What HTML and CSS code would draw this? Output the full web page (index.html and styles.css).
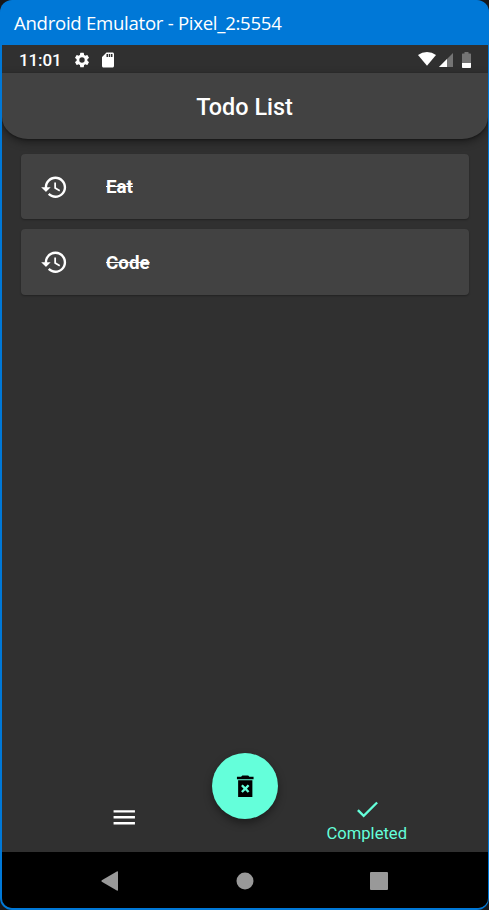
FILE: index.html
```html
<!DOCTYPE html>
<html lang="en">
<head>
<meta charset="utf-8">
<title>Todo List</title>
<link rel="stylesheet" href="styles.css">
</head>
<body>
<div class="window">
  <div class="titlebar"><span class="window-title">Android Emulator - Pixel_2:5554</span></div>
  <div class="screen">
    <div class="status">
      <span class="clock">11:01</span>
      <svg class="gear" viewBox="0 0 24 24"><path d="M19.14 12.94c.04-.3.06-.61.06-.94 0-.32-.02-.64-.07-.94l2.03-1.58a.49.49 0 0 0 .12-.61l-1.92-3.32a.49.49 0 0 0-.59-.22l-2.39.96c-.5-.38-1.03-.7-1.62-.94l-.36-2.54a.48.48 0 0 0-.48-.41h-3.84a.47.47 0 0 0-.47.41l-.36 2.54c-.59.24-1.13.57-1.62.94l-2.39-.96a.48.48 0 0 0-.59.22L2.74 8.87a.48.48 0 0 0 .12.61l2.03 1.58c-.05.3-.09.63-.09.94s.02.64.07.94l-2.03 1.58a.49.49 0 0 0-.12.61l1.92 3.32c.12.22.37.29.59.22l2.39-.96c.5.38 1.03.7 1.62.94l.36 2.54c.05.24.24.41.48.41h3.84c.24 0 .44-.17.47-.41l.36-2.54c.59-.24 1.13-.56 1.62-.94l2.39.96c.22.08.47 0 .59-.22l1.92-3.32a.47.47 0 0 0-.12-.61l-2.01-1.58zM12 15.6A3.6 3.6 0 1 1 12 8.4a3.6 3.6 0 0 1 0 7.2z"/></svg>
      <svg class="sd" viewBox="0 0 24 24"><path d="M18 2h-8L4.02 8 4 20c0 1.1.9 2 2 2h12c1.1 0 2-.9 2-2V4c0-1.1-.9-2-2-2zm-6 6h-2V4h2v4zm3 0h-2V4h2v4zm3 0h-2V4h2v4z"/></svg>
      <span class="spacer"></span>
      <svg class="wifi" viewBox="0 0 18 14"><path d="M9 13.8 0 2.9Q4 0 9 0t9 2.9z"/></svg>
      <svg class="signal" viewBox="0 0 14 14"><path class="dim" d="M14 0v14H0z"/><path d="M8 6v8H0z"/></svg>
      <svg class="battery" viewBox="0 0 9 16"><path class="dim" d="M2.5 0h4v1.5H8.3a.7.7 0 0 1 .7.7V11H0V2.2a.7.7 0 0 1 .7-.7h1.8z"/><path d="M0 11h9v4.3a.7.7 0 0 1-.7.7H.7a.7.7 0 0 1-.7-.7z"/></svg>
    </div>
    <header class="appbar"><h1>Todo List</h1></header>
    <main class="list">
      <div class="card">
        <svg class="icon" viewBox="0 0 24 24"><path d="M13 3c-4.97 0-9 4.03-9 9H1l3.89 3.89.07.14L9 12H6c0-3.87 3.13-7 7-7s7 3.13 7 7-3.13 7-7 7c-1.93 0-3.68-.79-4.94-2.06l-1.42 1.42C8.27 19.99 10.51 21 13 21c4.97 0 9-4.03 9-9s-4.03-9-9-9zm-1 5v5l4.28 2.54.72-1.21-3.5-2.08V8H12z"/></svg>
        <span class="task">Eat</span>
      </div>
      <div class="card">
        <svg class="icon" viewBox="0 0 24 24"><path d="M13 3c-4.97 0-9 4.03-9 9H1l3.89 3.89.07.14L9 12H6c0-3.87 3.13-7 7-7s7 3.13 7 7-3.13 7-7 7c-1.93 0-3.68-.79-4.94-2.06l-1.42 1.42C8.27 19.99 10.51 21 13 21c4.97 0 9-4.03 9-9s-4.03-9-9-9zm-1 5v5l4.28 2.54.72-1.21-3.5-2.08V8H12z"/></svg>
        <span class="task">Code</span>
      </div>
    </main>
    <footer class="tabs">
      <div class="tab menu"><svg class="icon" viewBox="0 0 24 24"><path d="M3 18h18v-2H3v2zm0-5h18v-2H3v2zm0-7v2h18V6H3z"/></svg></div>
      <div class="tab active"><svg class="icon" viewBox="0 0 24 24"><path d="M9 16.17 4.83 12l-1.42 1.41L9 19 21 7l-1.41-1.41z"/></svg><span>Completed</span></div>
      <div class="fab"><svg class="icon" viewBox="0 0 24 24"><path d="M6 21h12V7H6v14zm2.46-9.12 1.41-1.41L12 12.59l2.12-2.12 1.41 1.41L13.41 14l2.12 2.12-1.41 1.41L12 15.41l-2.12 2.12-1.41-1.41L10.59 14l-2.13-2.12zM15.5 4l-1-1h-5l-1 1H5v2h14V4z"/></svg></div>
    </footer>
    <nav class="sysnav">
      <svg viewBox="0 0 24 24"><path d="M3.8 11.3 18.8 2.5q1.2-.5 1.2.6v17.8q0 1.1-1.2.6L3.8 12.7q-1-.7 0-1.4z"/></svg>
      <svg viewBox="0 0 24 24"><circle cx="12" cy="12" r="8.5"/></svg>
      <svg viewBox="0 0 24 24"><rect x="3" y="3" width="18" height="18" rx="1"/></svg>
    </nav>
  </div>
</div>
</body>
</html>
```
FILE: styles.css
```css
* { box-sizing: border-box; }
body { margin: 0; background: #17181b; font-family: Roboto, sans-serif; color: #fff; }
svg { display: block; flex: none; fill: currentColor; }
.window {
  width: 489px; height: 910px; padding: 0 1px 2px 2px;
  background: #0078d7; border-radius: 12px; overflow: hidden;
  display: flex; flex-direction: column;
}
.titlebar { height: 45px; flex: none; padding: 0 12px; display: flex; align-items: center; }
.window-title { font: 18.6px/24px "Open Sans", sans-serif; letter-spacing: -0.28px; white-space: nowrap; }
.screen {
  flex: 1; display: flex; flex-direction: column;
  background: #303030; border-radius: 0 0 10px 10px; overflow: hidden;
}
.status { height: 28px; flex: none; display: flex; align-items: center; padding: 2px 17px 0 17px; background: #303030; }
.clock { width: 43px; margin-right: 11px; font-size: 17px; font-weight: 500; white-space: nowrap; letter-spacing: -0.1px; }
.gear { width: 18px; height: 18px; margin-right: 8px; }
.sd { width: 18px; height: 18px; }
.spacer { flex: 1; }
.wifi { width: 18px; height: 14px; margin: -2px 3px 0 0; }
.signal { width: 14px; height: 14px; margin-right: 9px; margin-top: -1px; }
.battery { width: 9px; height: 16px; margin-top: -1px; }
.dim { fill: #747474; }
.appbar {
  height: 66px; flex: none; display: flex; align-items: center; justify-content: center;
  background: #424242; border-radius: 0 0 26px 26px / 0 0 22px 22px;
  box-shadow: 0 3px 8px rgba(0, 0, 0, .42), 0 1px 2px rgba(0, 0, 0, .3);
}
h1 { margin: 2px 1px 0 0; font-size: 23.4px; line-height: 28px; font-weight: 500; }
.list { flex: 1; padding: 14.5px 19px 0; display: flex; flex-direction: column; gap: 10px; }
.card {
  height: 65.5px; display: flex; align-items: center; gap: 37.5px; padding: 1px 0 0 19px;
  background: #424242; border-radius: 4px; box-shadow: 0 1px 2px rgba(0, 0, 0, .3);
}
.icon { width: 28.5px; height: 28.5px; }
.task { padding-top: 1px; font-size: 18.8px; font-weight: 700; text-decoration: line-through; }
.tabs { position: relative; height: 66px; flex: none; display: flex; }
.tab { flex: 1; display: flex; flex-direction: column; align-items: center; justify-content: center; font-size: 16.6px; line-height: 19px; }
.menu { padding: 0 0 3px 1px; }
.active { color: #64ffda; }
.fab {
  position: absolute; left: 210px; top: -33px; width: 66px; height: 66px; border-radius: 50%;
  display: flex; align-items: center; justify-content: center; background: #64ffda; color: #000;
  box-shadow: 0 4px 8px rgba(0, 0, 0, .4);
}
.sysnav {
  height: 56px; flex: none; display: flex; align-items: center; justify-content: space-between;
  padding: 1px 97px 0 96px; background: #000; color: #999;
}
.sysnav svg { width: 24px; height: 24px; }
```
